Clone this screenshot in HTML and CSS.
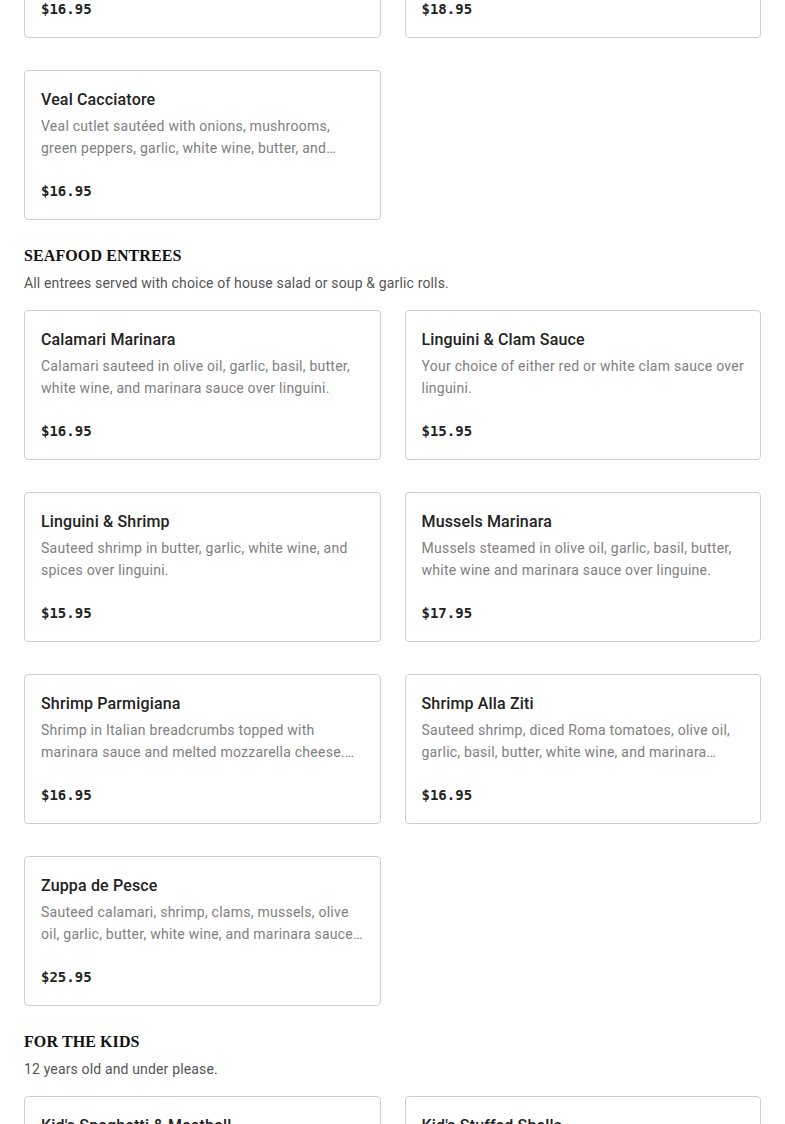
FILE: index.html
```html
<!DOCTYPE html>
<html lang="en">
<head>
<meta charset="utf-8">
<title>Menu</title>
<link rel="stylesheet" href="styles.css">
</head>
<body>
<main class="menu">
  <section class="section section-first">
    <div class="grid">
      <article class="card">
        <h3 class="card-title">Veal Parmigiana</h3>
        <p class="card-desc">Breaded veal cutlet topped with marinara sauce and melted mozzarella cheese.</p>
        <div class="card-price">$16.95</div>
      </article>
      <article class="card">
        <h3 class="card-title">Veal Marsala</h3>
        <p class="card-desc">Veal cutlet sautéed with mushrooms in a marsala wine sauce.</p>
        <div class="card-price">$18.95</div>
      </article>
      <article class="card">
        <h3 class="card-title">Veal Cacciatore</h3>
        <p class="card-desc">Veal cutlet sautéed with onions, mushrooms, green peppers, garlic, white wine, butter, and marinara sauce over linguini.</p>
        <div class="card-price">$16.95</div>
      </article>
    </div>
  </section>

  <section class="section">
    <h2 class="section-title">SEAFOOD ENTREES</h2>
    <p class="section-sub">All entrees served with choice of house salad or soup &amp; garlic rolls.</p>
    <div class="grid">
      <article class="card">
        <h3 class="card-title">Calamari Marinara</h3>
        <p class="card-desc">Calamari sauteed in olive oil, garlic, basil, butter, white wine, and marinara sauce over linguini.</p>
        <div class="card-price">$16.95</div>
      </article>
      <article class="card">
        <h3 class="card-title">Linguini &amp; Clam Sauce</h3>
        <p class="card-desc">Your choice of either red or white clam sauce over linguini.</p>
        <div class="card-price">$15.95</div>
      </article>
      <article class="card">
        <h3 class="card-title">Linguini &amp; Shrimp</h3>
        <p class="card-desc">Sauteed shrimp in butter, garlic, white wine, and spices over linguini.</p>
        <div class="card-price">$15.95</div>
      </article>
      <article class="card">
        <h3 class="card-title">Mussels Marinara</h3>
        <p class="card-desc">Mussels steamed in olive oil, garlic, basil, butter, white wine and marinara sauce over linguine.</p>
        <div class="card-price">$17.95</div>
      </article>
      <article class="card">
        <h3 class="card-title">Shrimp Parmigiana</h3>
        <p class="card-desc">Shrimp in Italian breadcrumbs topped with marinara sauce and melted mozzarella cheese. Served over linguini.</p>
        <div class="card-price">$16.95</div>
      </article>
      <article class="card">
        <h3 class="card-title">Shrimp Alla Ziti</h3>
        <p class="card-desc">Sauteed shrimp, diced Roma tomatoes, olive oil, garlic, basil, butter, white wine, and marinara sauce over ziti.</p>
        <div class="card-price">$16.95</div>
      </article>
      <article class="card">
        <h3 class="card-title">Zuppa de Pesce</h3>
        <p class="card-desc">Sauteed calamari, shrimp, clams, mussels, olive oil, garlic, butter, white wine, and marinara sauce over linguini.</p>
        <div class="card-price">$25.95</div>
      </article>
    </div>
  </section>

  <section class="section">
    <h2 class="section-title">FOR THE KIDS</h2>
    <p class="section-sub">12 years old and under please.</p>
    <div class="grid">
      <article class="card">
        <h3 class="card-title">Kid's Spaghetti &amp; Meatball</h3>
        <p class="card-desc">Spaghetti with marinara sauce and a meatball.</p>
        <div class="card-price">$7.95</div>
      </article>
      <article class="card">
        <h3 class="card-title">Kid's Stuffed Shells</h3>
        <p class="card-desc">Pasta shells stuffed with ricotta cheese and marinara sauce.</p>
        <div class="card-price">$7.95</div>
      </article>
    </div>
  </section>
</main>
</body>
</html>
```

FILE: styles.css
```css
* {
  box-sizing: border-box;
}

html, body {
  margin: 0;
  padding: 0;
  background: #fff;
}

body {
  font-family: Roboto, "Noto Sans", sans-serif;
  color: #222;
  overflow: hidden;
}

.menu {
  padding: 0 24px;
  margin-top: -112px;
}

.section {
  margin-top: 24px;
}

.section-first {
  margin-top: 0;
}

.section-title {
  margin: 0;
  font-family: "Liberation Serif", "DejaVu Serif", serif;
  font-weight: 700;
  font-size: 16px;
  line-height: 24px;
  letter-spacing: 0.1px;
  color: #111;
}

.section-sub {
  margin: 4px 0 16px;
  font-size: 14px;
  line-height: 22px;
  letter-spacing: 0.15px;
  color: #555;
}

.grid {
  display: grid;
  grid-template-columns: 1fr 1fr;
  column-gap: 24px;
  row-gap: 32px;
}

.card {
  border: 1px solid #cfcfcf;
  border-radius: 4px;
  padding: 17px 16px 0;
  height: 150px;
  display: flex;
  flex-direction: column;
}

.card-title {
  margin: 0;
  font-size: 16px;
  font-weight: 500;
  line-height: 24px;
  letter-spacing: 0.15px;
  color: #222;
}

.card-desc {
  margin: 3px 0 0;
  font-size: 14px;
  line-height: 22px;
  letter-spacing: 0.25px;
  color: #808080;
  height: 44px;
  overflow: hidden;
  display: -webkit-box;
  -webkit-line-clamp: 2;
  -webkit-box-orient: vertical;
}

.card-price {
  margin-top: 21px;
  font-family: "DejaVu Sans Mono", "Liberation Mono", monospace;
  font-weight: 700;
  font-size: 14px;
  line-height: 22px;
  color: #222;
}
```
